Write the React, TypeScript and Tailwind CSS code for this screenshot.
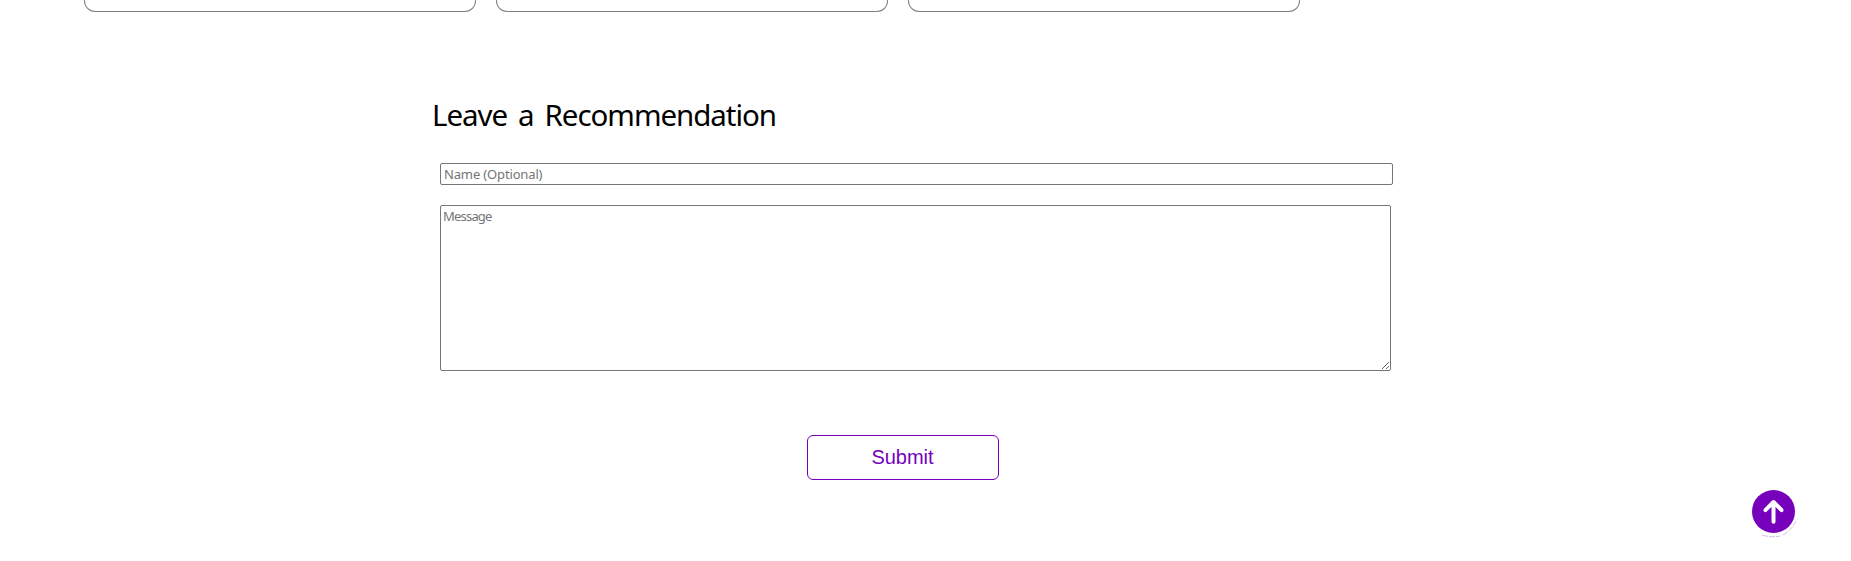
import React from "react";

function Card() {
  return <div className="h-full w-[392px] rounded-b-[11px] border border-t-0 border-[#808080]" />;
}

export default function App() {
  return (
    <main className="h-[561px] overflow-hidden bg-white font-['Trebuchet_MS','Noto_Sans',sans-serif] text-black">
      <section className="flex h-3 gap-5 pl-[84px]">
        <Card />
        <Card />
        <Card />
      </section>
      <form className="ml-[432px] flex w-[961px] flex-col pt-[84px]" onSubmit={(e) => e.preventDefault()}>
        <h2 className="h-[38px] whitespace-nowrap text-[29.5px] leading-[38px] tracking-[-1.05px] [word-spacing:4.4px]">Leave a Recommendation</h2>
        <input
          placeholder="Name (Optional)"
          className="mt-[29px] ml-2 h-[22px] w-[953px] rounded-[2px] border border-[#767676] px-[3px] text-[13px] leading-[18px] tracking-[-0.15px] placeholder:text-[#757575]"
        />
        <textarea
          placeholder="Message"
          className="mt-5 ml-2 h-[166px] w-[951px] resize rounded-[2px] border border-[#767676] px-[2px] py-px text-[13px] leading-[18px] tracking-[-0.8px] placeholder:text-[#757575]"
        />
        <button className="mt-16 ml-[375px] h-[45px] w-[192px] rounded-[6px] border border-[#7600bc] pr-px pb-px font-['Liberation_Sans',Arial,sans-serif] text-[20px] text-[#7600bc]">
          Submit
        </button>
      </form>
      <button aria-label="Back to top" className="fixed right-[51px] bottom-[23px]">
        <svg width="48" height="48" viewBox="0 0 48 48" fill="none" className="block">
          <circle cx="21.5" cy="21.5" r="21.5" fill="#7600bc" />
          <path d="M21.5 31.7V12M13.4 20.1L21.5 12L29.6 20.1" stroke="#fff" strokeWidth="4" strokeLinecap="round" strokeLinejoin="round" />
          <path d="M10 45Q20 48 28 46M31 45Q40 40 44 31" stroke="#7600bc" strokeOpacity="0.35" strokeWidth="0.8" strokeDasharray="6 1" />
        </svg>
      </button>
    </main>
  );
}
